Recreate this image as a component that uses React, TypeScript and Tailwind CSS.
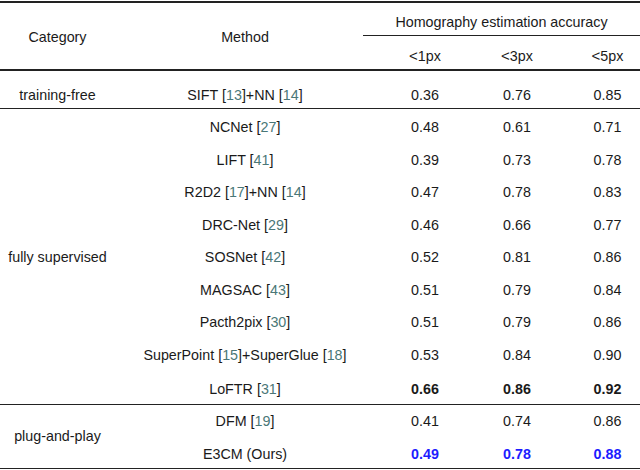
import React from "react"

type Row = {
  method: React.ReactNode
  vals: string[]
  bold?: boolean
  blue?: boolean
}

const Cite = ({ n }: { n: number }) => (
  <span>
    [<span className="text-[#4a7777]">{n}</span>]
  </span>
)

const cols = "grid grid-cols-[115px_260px_100px_84px_81px]"

const supervised: Row[] = [
  { method: <>NCNet <Cite n={27} /></>, vals: ["0.48", "0.61", "0.71"] },
  { method: <>LIFT <Cite n={41} /></>, vals: ["0.39", "0.73", "0.78"] },
  { method: <>R2D2 <Cite n={17} />+NN <Cite n={14} /></>, vals: ["0.47", "0.78", "0.83"] },
  { method: <>DRC-Net <Cite n={29} /></>, vals: ["0.46", "0.66", "0.77"] },
  { method: <>SOSNet <Cite n={42} /></>, vals: ["0.52", "0.81", "0.86"] },
  { method: <>MAGSAC <Cite n={43} /></>, vals: ["0.51", "0.79", "0.84"] },
  { method: <>Pacth2pix <Cite n={30} /></>, vals: ["0.51", "0.79", "0.86"] },
  {
    method: <>SuperPoint <Cite n={15} />+SuperGlue <Cite n={18} /></>,
    vals: ["0.53", "0.84", "0.90"],
  },
  { method: <>LoFTR <Cite n={31} /></>, vals: ["0.66", "0.86", "0.92"], bold: true },
]

const Cells = ({ row, h }: { row: Row; h: string }) => {
  const numClass = row.blue
    ? "font-bold text-[#1c1cff]"
    : row.bold
      ? "font-bold"
      : ""
  return (
    <>
      <div className={`${h} flex items-center justify-center`}>
        <span className="whitespace-pre">{row.method}</span>
      </div>
      <div className={`${h} flex items-center justify-center ${numClass}`}>{row.vals[0]}</div>
      <div className={`${h} flex items-center justify-center ${numClass}`}>{row.vals[1]}</div>
      <div className={`${h} flex items-center justify-center pl-4 ${numClass}`}>{row.vals[2]}</div>
    </>
  )
}

const App: React.FC = () => {
  return (
    <div
      className="w-[640px] h-[470px] overflow-hidden bg-white text-[14.3px] leading-[20px] text-[#1a1a1a]"
      style={{ fontFamily: '"Liberation Sans", Arial, sans-serif' }}
    >
      <div className="mt-[1px] border-t-2 border-[#222]" />

      {/* header */}
      <div className={`${cols} grid-rows-[33px_33px] border-b-2 border-[#222]`}>
        <div className="row-span-2 pt-[2px] flex items-center justify-center">Category</div>
        <div className="row-span-2 pt-[2px] flex items-center justify-center">Method</div>
        <div className="col-span-3 -ml-[12px] pt-[5px] flex items-center justify-center border-b border-[#222]">
          Homography estimation accuracy
        </div>
        <div className="pt-[6px] flex items-center justify-center">
          <span className="text-[15px]">&lt;</span>1px
        </div>
        <div className="pt-[6px] flex items-center justify-center">
          <span className="text-[15px]">&lt;</span>3px
        </div>
        <div className="pt-[6px] pl-4 flex items-center justify-center">
          <span className="text-[15px]">&lt;</span>5px
        </div>
      </div>

      {/* training-free */}
      <div className={`${cols} pt-[10px] border-b border-[#222]`}>
        <div className="h-[27px] flex items-center justify-center">training-free</div>
        <Cells
          row={{ method: <>SIFT <Cite n={13} />+NN <Cite n={14} /></>, vals: ["0.36", "0.76", "0.85"] }}
          h="h-[27px]"
        />
      </div>

      {/* fully supervised */}
      <div className={`${cols} pt-[2px] border-b border-[#222]`}>
        <div className="row-span-9 flex items-center justify-center">fully supervised</div>
        {supervised.map((r, i) => (
          <div key={i} className="contents">
            <Cells row={r} h={i === 8 ? "h-[32.5px] pt-[3px]" : "h-[32.5px]"} />
          </div>
        ))}
      </div>

      {/* plug-and-play */}
      <div className={`${cols} border-b border-[#222]`}>
        <div className="row-span-2 flex items-center justify-center">plug-and-play</div>
        <Cells row={{ method: <>DFM <Cite n={19} /></>, vals: ["0.41", "0.74", "0.86"] }} h="h-[32.5px]" />
        <Cells
          row={{ method: "E3CM (Ours)", vals: ["0.49", "0.78", "0.88"], blue: true }}
          h="h-[31px] pt-[2px]"
        />
      </div>
    </div>
  )
}

export default App
